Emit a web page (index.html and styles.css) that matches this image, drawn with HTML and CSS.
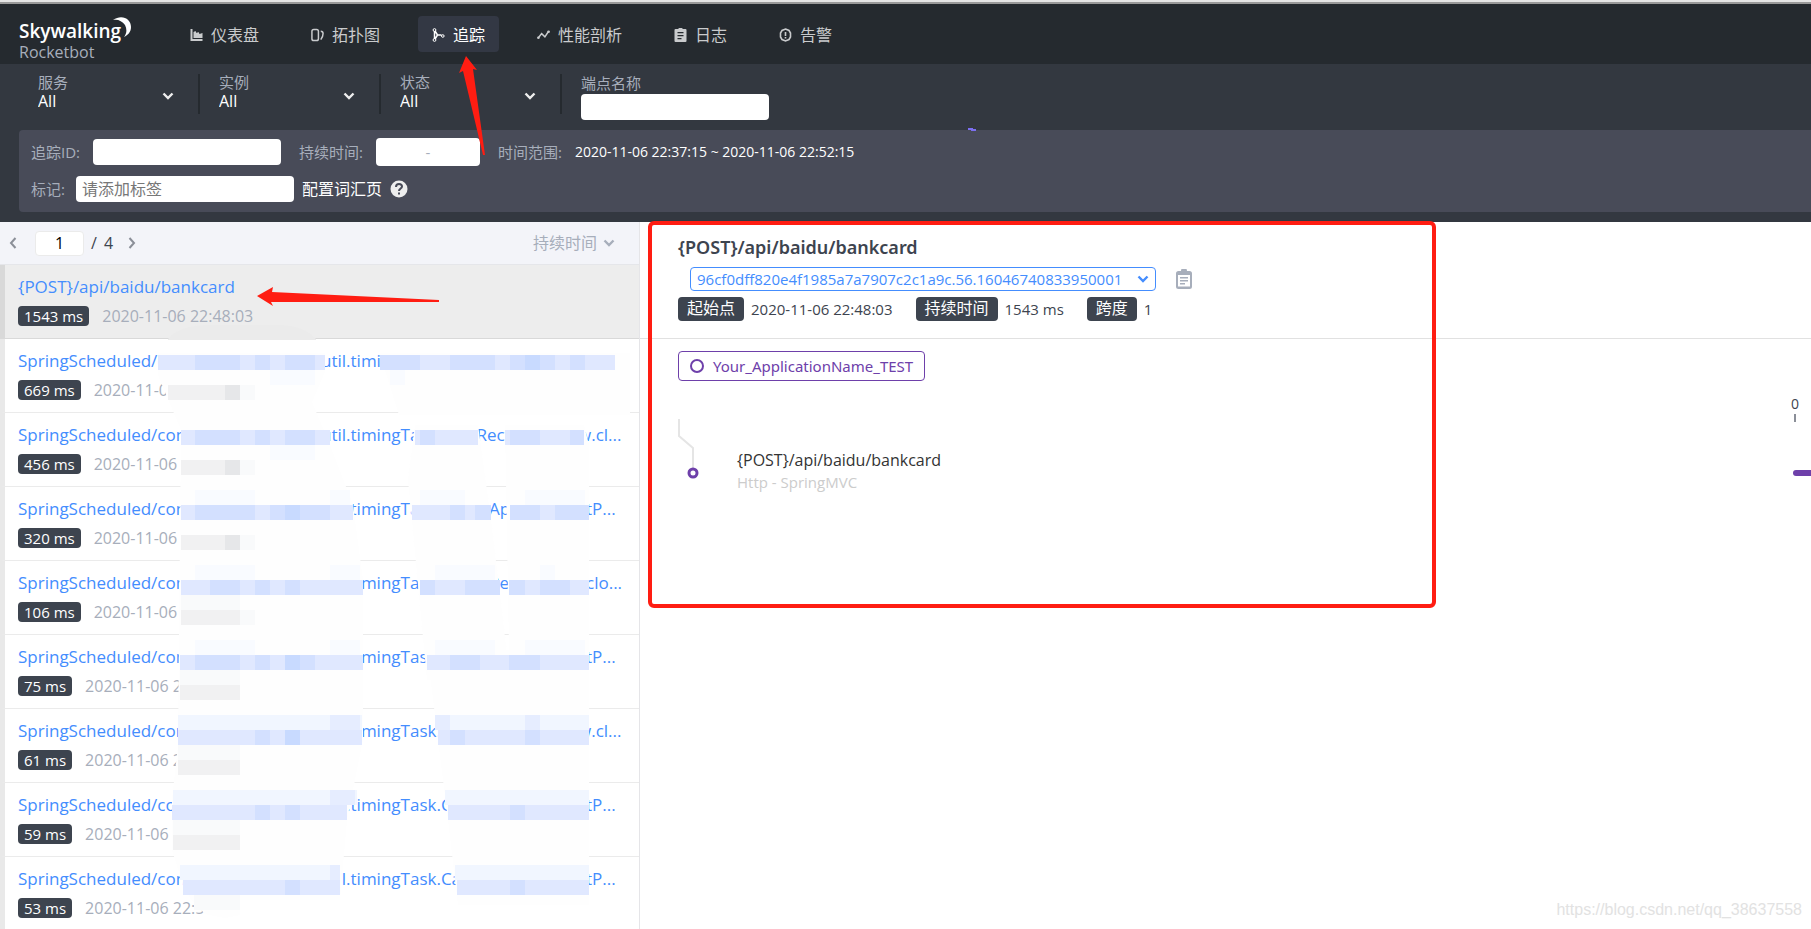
FILE: index.html
```html
<!DOCTYPE html>
<html lang="zh">
<head>
<meta charset="utf-8">
<title>Skywalking Rocketbot</title>
<link rel="stylesheet" href="styles.css">
</head>
<body>
<svg class="defs" aria-hidden="true">
  <symbol id="down" viewBox="0 0 12 8"><path d="M1.500 1.500 6 6 10.500 1.500" fill="none" stroke="currentColor" stroke-width="2.400"/></symbol>
  <symbol id="clip" viewBox="0 0 16 20"><path fill="currentColor" fill-rule="evenodd" d="M5 2a3 3 0 0 1 6 0h2.500A2.500 2.500 0 0 1 16 4.500v13a2.500 2.500 0 0 1-2.500 2.500h-11A2.500 2.500 0 0 1 0 17.500v-13A2.500 2.500 0 0 1 2.500 2zM2 6v11.500h12V6zM4 8h8v1.500H4zm0 3h8v1.500H4zm0 3h5v1.500H4z"/></symbol>
</svg>
<div class="strip"></div>
<header class="header">
  <div class="brand">
    <div class="logo">Skywalking</div>
    <svg class="moon" viewBox="0 0 20 22"><path fill="#fff" d="M1 3C10-3 19 2 19 10c0 5-3 8-7 10 3-4 3-8 1-12C10 4 6 2 1 3z"/></svg>
    <div class="sub">Rocketbot</div>
  </div>
  <nav class="nav">
    <a href="#"><svg viewBox="0 0 12 14"><path fill="currentColor" d="M0 1h2v10h10v2H0zM3 4l2-1 1 2 2-1 1 2 3-1v5H3z"/></svg>仪表盘</a>
    <a href="#"><svg viewBox="0 0 14 14"><path fill="none" stroke="currentColor" stroke-width="1.600" d="M3 1h3q2 0 2 2v8q0 2-2 2H3q-2 0-2-2V3q0-2 2-2zM10.500 3Q13 3 13 5.500 13 9 10.500 12"/></svg>拓扑图</a>
    <a class="on" href="#"><svg viewBox="0 0 12 14"><g fill="none" stroke="currentColor"><path stroke-width="1.500" d="M2 3v8M2.500 3 5 7h4M2.500 11 5 7"/><circle cx="2" cy="2" r="1.400"/><circle cx="2" cy="12" r="1.400"/><circle cx="10.300" cy="8" r="1.300"/></g></svg>追踪</a>
    <a href="#"><svg viewBox="0 0 14 14"><path fill="none" stroke="currentColor" stroke-width="1.600" d="M1.500 10 5 5.500 8.500 9l4-6"/><circle cx="1.500" cy="10" r="1.400" fill="currentColor"/><circle cx="12.500" cy="3.500" r="1.400" fill="currentColor"/></svg>性能剖析</a>
    <a href="#"><svg viewBox="0 0 12 14"><path fill="currentColor" fill-rule="evenodd" d="M4 1a2 2 0 0 1 4 0h3q1 0 1 1v11q0 1-1 1H1q-1 0-1-1V2q0-1 1-1zM3 4v1.300h6V4zm0 3v1.300h6V7zm0 3v1.300h4V10z"/></svg>日志</a>
    <a href="#"><svg viewBox="0 0 12 14"><path fill="none" stroke="currentColor" stroke-width="1.600" d="M6 1l3.500 1.500L11 5v4l-1.500 2.500L6 13l-3.500-1.500L1 9V5l1.500-2.500zM6 4v4M6 9v1.500"/></svg>告警</a>
  </nav>
</header>
<section class="tools">
  <div class="selectors">
    <label class="pick"><span>服务</span><select><option>All</option></select><svg><use href="#down"/></svg></label>
    <label class="pick"><span>实例</span><select><option>All</option></select><svg><use href="#down"/></svg></label>
    <label class="pick"><span>状态</span><select><option>All</option></select><svg><use href="#down"/></svg></label>
    <label class="endpoint"><span>端点名称</span><input class="box" type="text"></label>
  </div>
  <form class="filters">
    <div class="line">
      <label class="fl">追踪ID:<input class="box" type="text"></label>
      <div class="fl">持续时间:<span class="range"><input type="text" aria-label="最小持续时间">-<input type="text" aria-label="最大持续时间"></span></div>
      <div class="fl">时间范围:<span class="dates">2020-11-06 22:37:15 ~ 2020-11-06 22:52:15</span></div>
    </div>
    <div class="line tags">
      <label class="fl">标记:<input class="box tag" type="text" placeholder="请添加标签"></label>
      <a href="#">配置词汇页</a>
      <svg class="help" viewBox="0 0 18 18"><circle cx="9" cy="9" r="8.500" fill="#eee"/><path d="M6 7q0-3 3-3t3 2.500c0 2-3 2-3 4.500" fill="none" stroke="#484b58" stroke-width="2"/><path d="M8 12.500h2v2H8z" fill="#484b58"/></svg>
    </div>
  </form>
</section>
<main class="main">
  <section class="list">
    <div class="pager">
      <button type="button" aria-label="上一页"><svg viewBox="0 0 8 12"><path d="M6.500 1 2 6l4.500 5"/></svg></button>
      <input type="text" value="1" aria-label="页码"><span>/</span><span>4</span>
      <button type="button" aria-label="下一页"><svg viewBox="0 0 8 12"><path d="M1.500 1 6 6l-4.500 5"/></svg></button>
      <label class="sort"><select aria-label="排序"><option>持续时间</option></select><svg><use href="#down"/></svg></label>
    </div>
    <ul class="rows">
      <li class="sel"><a href="#" class="t"><span>{POST}/api/baidu/bankcard</span></a><div><b>1543 ms</b><time>2020-11-06 22:48:03</time></div></li>
      <li><a href="#" class="t"><span>SpringScheduled/c</span><span>util.timi</span></a><div><b>669 ms</b><time>2020-11-06</time></div></li>
      <li><a href="#" class="t"><span>SpringScheduled/com</span><span>util.timingTas</span><span>eRec</span><span>w.cl...</span></a><div><b>456 ms</b><time>2020-11-06</time></div></li>
      <li><a href="#" class="t"><span>SpringScheduled/com</span><span>util.timingTa</span><span class="ap">Ap</span><span class="e">tP...</span></a><div><b>320 ms</b><time>2020-11-06</time></div></li>
      <li><a href="#" class="t"><span>SpringScheduled/com</span><span>util.timingTas</span><span class="ap">Re</span><span class="e">clo...</span></a><div><b>106 ms</b><time>2020-11-06</time></div></li>
      <li><a href="#" class="t"><span>SpringScheduled/com</span><span>util.timingTas</span><span></span><span class="e">tP...</span></a><div><b>75 ms</b><time>2020-11-06 22</time></div></li>
      <li><a href="#" class="t"><span>SpringScheduled/com</span><span>util.timingTask.</span><span></span><span>w.cl...</span></a><div><b>61 ms</b><time>2020-11-06 22</time></div></li>
      <li><a href="#" class="t"><span>SpringScheduled/com</span><span>util.timingTask.C</span><span></span><span class="e">tP...</span></a><div><b>59 ms</b><time>2020-11-06</time></div></li>
      <li><a href="#" class="t"><span>SpringScheduled/com</span><span>util.timingTask.Ca</span><span></span><span class="e">tP...</span></a><div><b>53 ms</b><time>2020-11-06 22:53</time></div></li>
    </ul>
  </section>
  <section class="detail">
    <div class="head">
      <h1>{POST}/api/baidu/bankcard</h1>
      <div class="idline">
        <label class="trace"><select aria-label="追踪ID"><option>96cf0dff820e4f1985a7a7907c2c1a9c.56.16046740833950001</option></select><svg><use href="#down"/></svg></label>
        <button type="button" aria-label="复制"><svg><use href="#clip"/></svg></button>
      </div>
      <div class="meta"><b>起始点</b><span>2020-11-06 22:48:03</span><b>持续时间</b><span>1543 ms</span><b>跨度</b><span>1</span></div>
    </div>
    <div class="body">
      <div class="legend"><i></i>Your_ApplicationName_TEST</div>
      <div class="tree">
        <svg class="branch" viewBox="0 0 24 64"><path d="M1 0v17l14 12v23" fill="none" stroke="#e5e5e5" stroke-width="2"/><circle cx="15" cy="54" r="4" fill="#fff" stroke="#6e40aa" stroke-width="3"/></svg>
        <div class="span"><div>{POST}/api/baidu/bankcard</div><small>Http - SpringMVC</small></div>
        <div class="axis"><span>0</span><i></i><em></em></div>
      </div>
    </div>
    <div class="mark">https://blog.csdn.net/qq_38637558</div>
  </section>
</main>
<svg class="notes" width="1811" height="929" aria-hidden="true">
  <g fill="#fefefe">
    <path d="M158 353H325V372L312 402 330 445 353 505 363 580V740L347 820 340 900H240V915L225 918 205 914 190 898 183 885 172 850V800L178 745 181 430 165 392 158 375Z"/>
    <path d="M380 353H630V415H399L388 380Z"/>
    <path d="M415 425H478L491 520 500 595 510 680H427L412 520 408 480Z"/>
    <path d="M505 425H584L589 445V905H458L448 820 438 740 427 650H509Z"/>
    <path fill="#ebebeb" d="M168 339q12-14 40-14h70q25 0 38 14v1H168z"/>
  </g>
  <g fill="none" stroke-width="15">
    <path stroke="#f9fbff" d="M270 377.500h45M390 377.500h15M270 452.500h45M195 497.500h60M330 497.500h20M420 497.500h45M525 497.500h60M195 572.500h60M330 572.500h30M435 572.500h60M540 572.500h15M195 647.500h60M330 647.500h30M435 647.500h60M525 647.500h60"/>
    <path stroke="#f1f6ff" d="M178 722.500h184M435 722.500h154M173 797.500h184M445 797.500h144M180 872.500h160M455 872.500h134"/>
    <path stroke="#e6edff" d="M330 722.500h30M330 797.500h25M330 872.500h10M435 722.500h15M525 722.500h15"/>
    <path stroke="#e0e8ff" d="M158 362.500h167M380 362.500h235M181 437.500h149M415 437.500h63M505 437.500h79M181 512.500h172M412 512.500h79M510 512.500h79M181 587.500h182M420 587.500h80M509 587.500h80M180 662.500h183M427 662.500h82M509 662.500h80M178 737.500h184M438 737.500h151M172 812.500h175M448 812.500h141M183 887.500h157M457 887.500h132"/>
    <path stroke="#d3e0ff" d="M195 362.500h45M255 362.500h15M285 362.500h30M380 362.500h40M450 362.500h45M510 362.500h45M570 362.500h15M195 437.500h45M255 437.500h15M285 437.500h30M420 437.500h15M510 437.500h30M570 437.500h14M195 512.500h60M270 512.500h60M450 512.500h15M475 512.500h16M510 512.500h30M555 512.500h34M210 587.500h30M255 587.500h15M285 587.500h15M420 587.500h15M465 587.500h35M509 587.500h16M540 587.500h30M195 662.500h45M255 662.500h15M285 662.500h30M450 662.500h30M509 662.500h31M255 737.500h15M450 737.500h15M525 737.500h15M255 812.500h15M285 812.500h15M510 812.500h15M285 887.500h15M510 887.500h15"/>
    <path stroke="#c8daff" d="M285 512.500h15M285 662.500h15M285 737.500h15M525 362.500h15"/>
    <path stroke="#f1f1f2" d="M168 392.500h72M181 467.500h59M181 542.500h59M181 617.500h59M180 692.500h60M178 767.500h62M173 842.500h67"/>
    <path stroke="#f9fafb" d="M240 392.500h15M240 467.500h15M240 542.500h15M240 617.500h15M181 602.500h59M180 677.500h60M178 752.500h62M173 827.500h67M194 902.500h46"/>
    <path stroke="#e6e7e9" d="M225 392.500h15M225 467.500h15M225 542.500h15"/>
  </g>
  <g fill="#ff1d12">
    <path d="M466 56 477 70 473 69 485 155H483L463 71 459 73Z"/>
    <path d="M257 296 273 287 272 292 439 300V302L271 302 273 306Z"/>
  </g>
  <rect x="650" y="223" width="784" height="383" rx="4" fill="none" stroke="#ff1d12" stroke-width="4"/>
  <path d="M968 129h4v1h4" stroke="#7c6ff0" stroke-width="2" fill="none"/>
</svg>
</body>
</html>
```
FILE: styles.css
```css
* { box-sizing: border-box; }
body {
  margin: 0;
  height: 100vh;
  overflow: hidden;
  display: flex;
  flex-direction: column;
  background: #fff;
  color: #3d444f;
  font: 15px/20px "Open Sans", "Noto Sans CJK SC", sans-serif;
}
a { color: inherit; text-decoration: none; }
input, select, button {
  font: inherit;
  color: inherit;
  border: 0;
  padding: 0;
  margin: 0;
  background: none;
  appearance: none;
  min-width: 0;
}
.defs { display: none; }
.strip { height: 4px; flex: none; background: #e5e5e5; border-bottom: 2px solid #999; }

.header { height: 60px; flex: none; display: flex; background: #252a2f; color: #c9cbcd; }
.brand { position: relative; width: 176px; padding: 15px 0 0 19px; }
.logo { font-size: 19px; line-height: 24px; font-weight: 600; color: #fff; }
.moon { position: absolute; left: 112px; top: 13px; width: 20px; height: 22px; }
.sub { font-size: 16px; line-height: 18px; color: #a7aebb; }
.nav { display: flex; gap: 24px; padding-top: 12px; }
.nav a {
  height: 36px;
  padding: 2px 14px 0;
  display: flex;
  align-items: center;
  gap: 8px;
  border-radius: 4px;
  font-size: 16px;
}
.nav svg { width: 13px; height: 14px; }
.nav .on { background: #333844; color: #fff; }

.tools { flex: none; background: #333840; padding: 0 0 10px 19px; }
.selectors { height: 66px; display: flex; padding-top: 10px; }
.pick {
  width: 181px;
  height: 40px;
  padding-left: 19px;
  display: grid;
  grid-template-columns: 1fr 36px;
  grid-template-rows: 16px 22px;
  align-items: center;
  border-right: 2px solid #252a2f;
  color: #a7aebb;
}
.pick select { grid-area: 2 / 1 / 3 / 3; line-height: 22px; font-size: 16px; color: #fff; }
.pick svg { grid-area: 1 / 2 / 3 / 3; width: 12px; height: 8px; margin-top: 5px; color: #eee; pointer-events: none; }
.pick span { grid-area: 1 / 1; line-height: 16px; }
.endpoint { padding-left: 19px; display: flex; flex-direction: column; color: #a7aebb; }
.endpoint span { line-height: 18px; margin-bottom: 2px; }
.box { width: 188px; height: 26px; padding: 0 6px; border-radius: 4px; background: #fff; color: #333; }
.filters {
  height: 82px;
  padding: 8px 12px;
  border-radius: 4px 0 0 4px;
  background: #484b58;
  color: #a7aebb;
}
.line { height: 28px; display: flex; align-items: center; gap: 18px; }
.fl { display: flex; align-items: center; gap: 13px; }
.range { width: 104px; height: 28px; display: flex; align-items: center; border-radius: 4px; background: #fff; }
.range input { flex: 1; height: 28px; }
.dates { font-size: 14px; color: #fff; }
.tags { margin-top: 9px; gap: 8px; color: #fff; }
.tags .fl { gap: 11px; color: #a7aebb; }
.tag { width: 218px; font-size: 16px; }
.tag::placeholder { color: #777; }
.tags a { font-size: 16px; }
.help { width: 18px; height: 18px; }

.main { flex: 1; min-height: 0; display: flex; }
.list { width: 640px; flex: none; border-right: 1px solid #e5e5e8; overflow: hidden; }
.pager {
  height: 43px;
  padding: 0 24px 0 9px;
  display: flex;
  align-items: center;
  background: #f3f4f9;
  border-bottom: 1px solid #e5e6ea;
  font-size: 16px;
}
.pager button { width: 10px; height: 20px; display: flex; align-items: center; }
.pager button svg { width: 8px; height: 12px; fill: none; stroke: #8b8f98; stroke-width: 2; }
.pager input { width: 49px; height: 25px; margin: 0 7px 0 16px; border: 1px solid #ebebeb; border-radius: 4px; background: #fff; text-align: center; color: #000; }
.pager span { margin-right: 7px; }
.pager span + button { margin-left: 8px; }
.sort { margin-left: auto; display: flex; align-items: center; gap: 5px; color: #a7aebb; }
.sort svg { width: 12px; height: 8px; }
.rows { list-style: none; margin: 0; padding: 0; }
.rows li { height: 74px; padding: 12px 0 0 13px; border-left: 5px solid #e9e9e9; border-bottom: 1px solid #ebebeb; }
.rows .sel { background: #ededed; border-left-color: #d9d9d9; border-bottom-color: #d9d9d9; }
.t {
  height: 20px;
  display: grid;
  grid-template-columns: 303px 146px 111px auto;
  font-size: 17px;
  color: #448dfe;
  white-space: nowrap;
}
.sel .t { display: block; }
.t .ap { padding-left: 22px; }
.t .e { padding-left: 8px; }
.rows div { display: flex; align-items: center; gap: 13px; margin-top: 9px; color: #a7aebb; }
.rows time { font-size: 16px; }
.rows b { padding: 0 6px; height: 20px; border-radius: 4px; background: #3d444f; color: #fff; font-weight: 400; }

.detail { position: relative; flex: 1; min-width: 0; }
.head { height: 117px; padding: 13px 0 0 38px; border-bottom: 1px solid #e1e1e1; }
h1 { margin: 0; font-family: "Noto Sans", sans-serif; font-size: 18px; line-height: 24px; font-weight: 600; }
.idline { display: flex; align-items: center; gap: 20px; margin: 8px 0 6px 12px; }
.trace { width: 466px; height: 24px; padding: 0 6px; display: flex; align-items: center; justify-content: space-between; border: 1px solid #448dfe; border-radius: 4px; color: #448dfe; }
.trace svg { width: 12px; height: 8px; }
.idline button { width: 16px; height: 20px; color: #a7aebb; }
.idline button svg { display: block; width: 16px; height: 20px; }
.meta { display: flex; align-items: center; }
.meta b { height: 24px; padding: 0 9px; font-size: 16px; line-height: 23px; border-radius: 4px; background: #3d444f; color: #fff; font-weight: 400; }
.meta span { margin: 0 23px 0 7px; }
.body { padding: 12px 0 0 38px; }
.legend {
  width: max-content;
  height: 30px;
  padding: 0 11px;
  display: flex;
  align-items: center;
  gap: 9px;
  border: 1px solid #6e40aa;
  border-radius: 4px;
  color: #6e40aa;
  font-family: "Noto Sans", sans-serif;
}
.legend i { width: 14px; height: 14px; border: 2px solid #6e40aa; border-radius: 50%; }
.tree { display: flex; margin-top: 38px; }
.branch { width: 24px; height: 64px; }
.span { margin: 30px 0 0 35px; font-size: 16px; line-height: 22px; color: #333; }
.span small { display: block; font-size: 15px; line-height: 22px; color: #ccc; }
.axis { margin: -25px 0 0 auto; width: 20px; display: flex; flex-direction: column; font-size: 14px; }
.axis i { width: 2px; height: 8px; margin-left: 3px; background: #8b8f98; }
.axis em { height: 6px; margin: 48px 0 0 2px; border-radius: 3px 0 0 3px; background: #6e40aa; }
.mark { position: absolute; right: 9px; bottom: 9px; font-family: "Liberation Sans", sans-serif; font-size: 16px; color: #e2e2e2; }
.notes { position: absolute; left: 0; top: 0; pointer-events: none; }
```
